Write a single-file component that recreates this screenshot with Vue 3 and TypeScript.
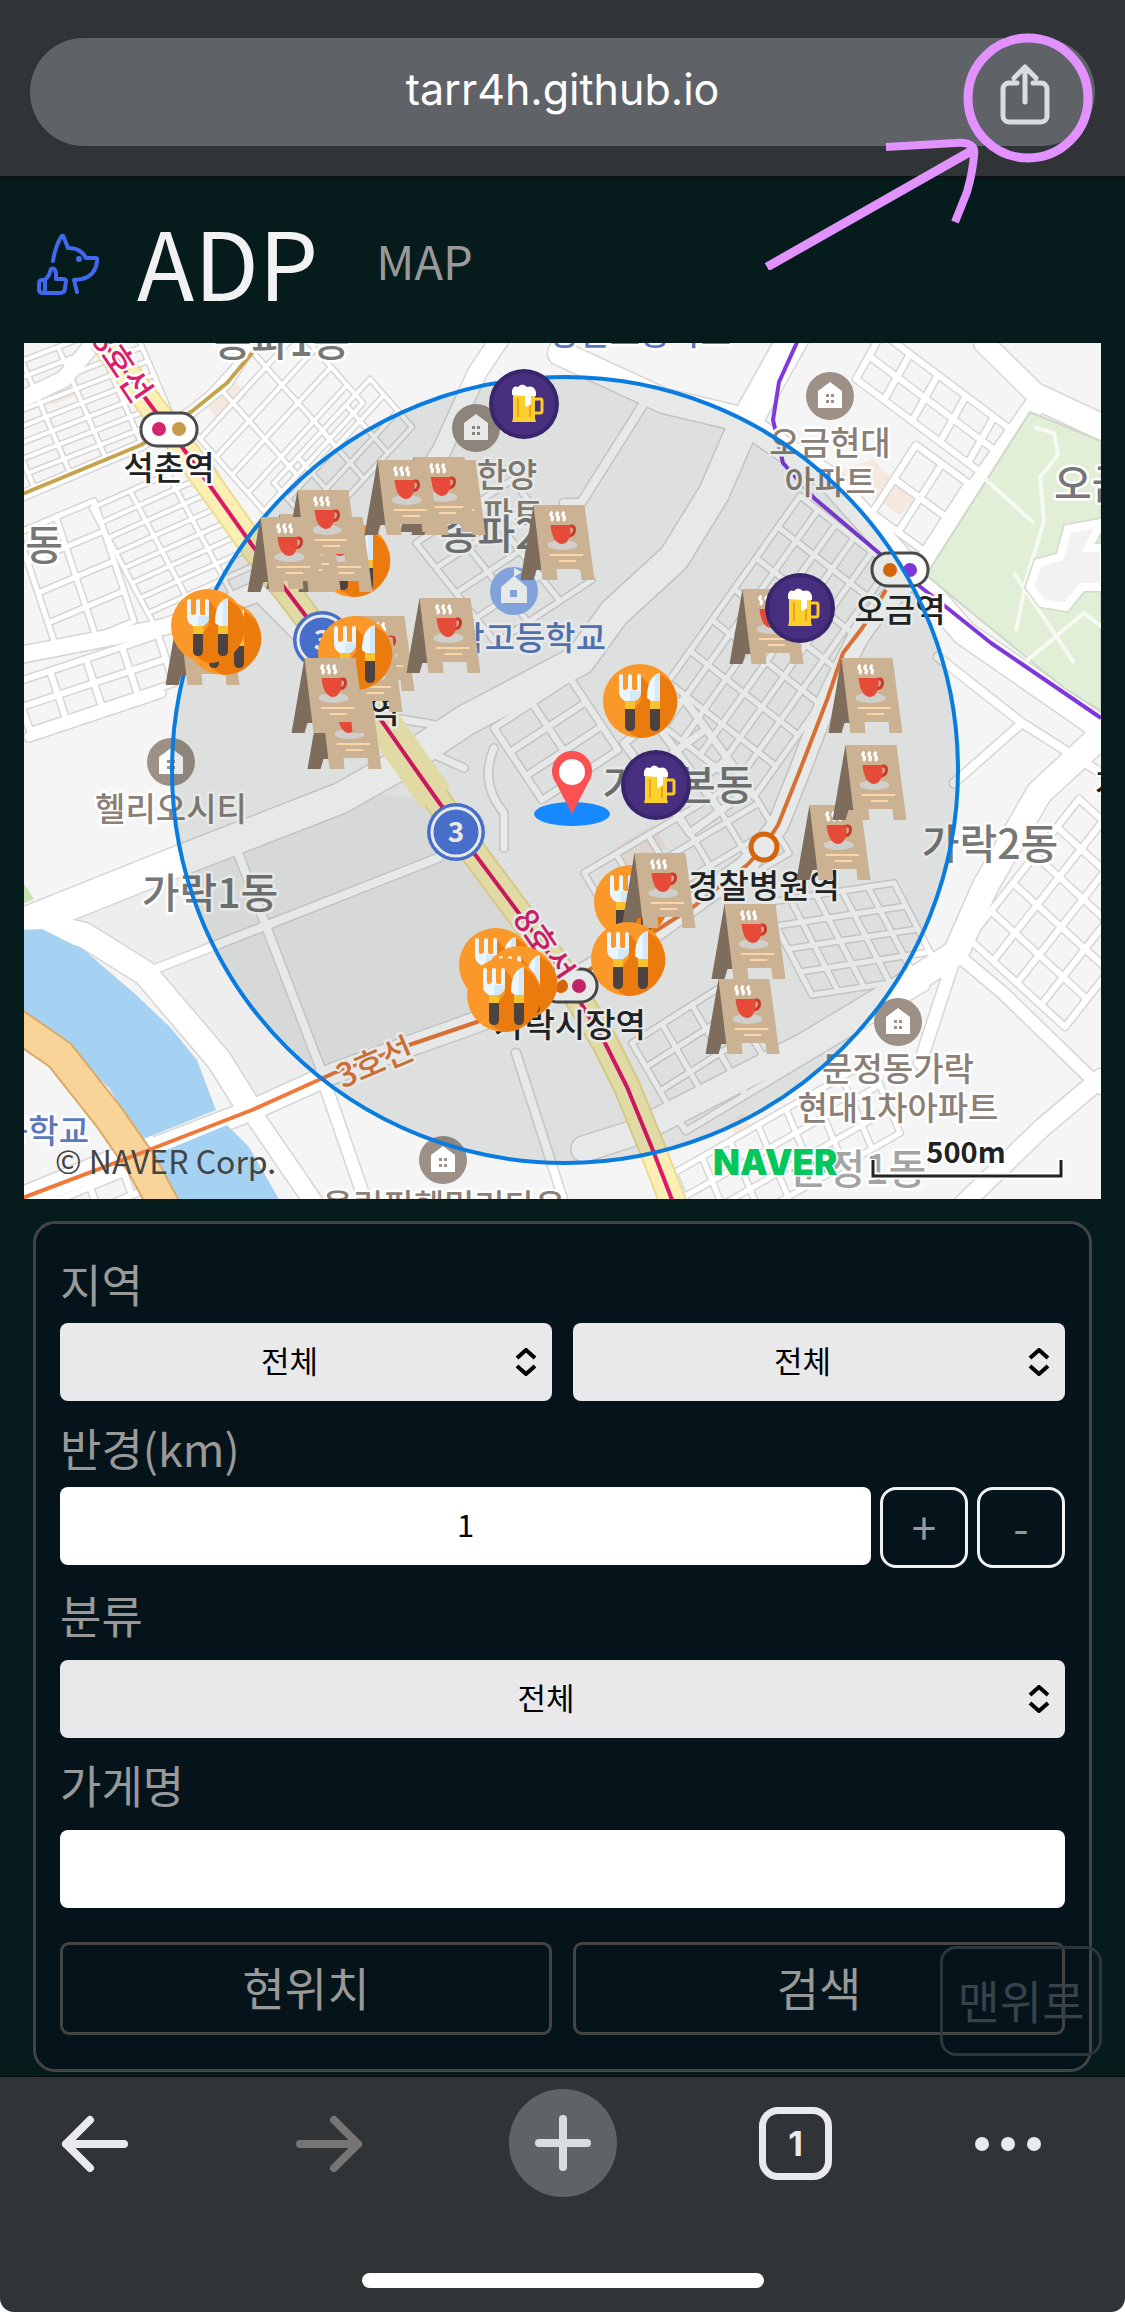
<script setup lang="ts">
import { ref } from 'vue'

type Kind = 'cafe' | 'food' | 'beer'
interface Marker { kind: Kind; x: number; y: number }
interface Label { text: string; x: number; y: number; tone: string; anchor?: 'start' | 'end'; turn?: number }
interface Road { d: string; w: number }

const host = ref('tarr4h.github.io')
const city = ref('전체')
const district = ref('전체')
const category = ref('전체')
const radius = ref('1')
const shopName = ref('')

function step(delta: number): void {
  radius.value = String(Math.max(1, Number(radius.value) + delta))
}
function toTop(): void {
  window.scrollTo({ top: 0, behavior: 'smooth' })
}

// Street mesh: nu by nv cells spanned by the vectors u and v.
function mesh(x: number, y: number, ux: number, uy: number, vx: number, vy: number, nu: number, nv: number): string {
  let d = ''
  for (let j = 0; j <= nv; j++) {
    d += `M${x + vx * j} ${y + vy * j}l${ux * nu} ${uy * nu}`
  }
  for (let i = 0; i <= nu; i++) {
    d += `M${x + ux * i} ${y + uy * i}l${vx * nv} ${vy * nv}`
  }
  return d
}

const roads: Road[] = [
  { d: mesh(-38, 32, 36, -14, 6, 14, 4, 8), w: 4 },
  { d: mesh(68, 165, 38, -17, 8, 15, 3, 8), w: 4 },
  { d: mesh(-6, 190, 38, -16, 10, 30, 2, 4), w: 5 },
  { d: mesh(160, 78, 33, -36, 16, 18, 3, 5), w: 4 },
  { d: mesh(250, 140, 24, -26, 14, 16, 4, 3), w: 4 },
  { d: mesh(-10, 340, 36, -12, 8, 24, 4, 2), w: 6 },
  { d: mesh(392, 200, 32, -21, 20, 25, 3, 4), w: 5 },
  { d: mesh(470, 385, 38, -25, 16, 24, 2, 3), w: 6 },
  { d: mesh(600, 400, 30, -22, 22, 30, 2, 3), w: 7 },
  { d: mesh(560, 530, 32, -19, 15, 25, 5, 3), w: 5 },
  { d: mesh(622, 370, 22, -31, 18, 14, 7, 6), w: 5 },
  { d: mesh(740, 560, 26, -4, 12, 23, 5, 4), w: 5 },
  { d: mesh(608, 700, 30, -19, 14, 24, 3, 3), w: 5 },
  { d: mesh(650, 770, 60, -36, 12, 18, 4, 1), w: 6 },
  { d: mesh(945, 596, 22, -28, 24, 22, 5, 4), w: 6 },
  { d: mesh(650, 830, 28, -16, 10, 24, 7, 3), w: 5 },
  { d: mesh(858, -10, 28, 21, -13, 23, 8, 2), w: 6 },
  { d: mesh(848, 170, 22, -34, 26, 19, 2, 2), w: 6 },
  { d: mesh(-10, 850, 34, -14, 8, 22, 4, 2), w: 6 },
  { d: 'M121 630L414 515M214 510L296 724M492 710L539 856M914 314L998 380L930 440M998 380L1077 430M622 57L557 160L540 160', w: 8 },
  { d: 'M5 394L137 350', w: 9 },
  { d: 'M385 400L440 425M480 505V470Q455 440 470 405M300 310L340 370L430 385', w: 7 },
  { d: 'M303 747L342 860M936 614L979 650L1077 745M932 610L896 720', w: 12 },
  { d: 'M225 765L290 860M1077 735L1019 784L935 865M480 -10L453 30L418 107L370 180', w: 18 },
  { d: 'M-10 60L40 36L78 -10M-4 312L140 284L235 250L285 300', w: 16 },
  { d: 'M536 10L640 58L716 76L806 137L880 220L940 290L1077 385', w: 24 },
  { d: 'M-10 584L30 568L150 520L317 455L370 425L442 377L556 317L590 270L650 215L690 150L716 90L772 -10', w: 30 },
  { d: 'M10 580L60 592L121 630L195 717L225 765', w: 24 },
  { d: 'M-10 860L117 810L228 767L310 730L453 679L536 644L633 587L723 522L754 482L776 427L803 357L839 284L900 220L1016 55L960 0', w: 20 },
  { d: 'M1016 55L1080 85M1080 390L1015 450L961 544L932 610L817 684L700 744L610 790L560 806', w: 25 },
  { d: 'M-10 156L117 102L167 69L203 40L235 -10', w: 10 },
]

const line8 = 'M78 -3L128 64L153 97L189 147L228 202L300 297L357 377L392 427L419 465L450 510L500 577L539 630L558 662L581 700L603 744L630 810L650 862'
const line3 = 'M862 247L839 284L819 310L803 357L776 427L754 482L740 504L723 522L669 564L633 587L536 644L453 679L385 702L310 730L228 767L117 810L-4 856'

const labels: Label[] = [
  { text: '석촌역', x: 145, y: 137, tone: 'station' },
  { text: '송파1동', x: 258, y: 13, tone: 'dong' },
  { text: '방산고등학교', x: 616, y: 2, tone: 'school' },
  { text: '8호선', x: 97, y: 34, tone: 'pink', turn: 56 },
  { text: '한양', x: 483, y: 144, tone: 'poi' },
  { text: '아파트', x: 474, y: 183, tone: 'poi' },
  { text: '송파2동', x: 484, y: 206, tone: 'dong' },
  { text: '동', x: 20, y: 217, tone: 'dong' },
  { text: '가락고등학교', x: 491, y: 307, tone: 'school' },
  { text: '오금현대', x: 806, y: 112, tone: 'poi' },
  { text: '아파트', x: 806, y: 151, tone: 'poi' },
  { text: '오금역', x: 876, y: 279, tone: 'station' },
  { text: '오금공원', x: 1030, y: 156, tone: 'dong', anchor: 'start' },
  { text: '송파역', x: 330, y: 380, tone: 'station' },
  { text: '헬리오시티', x: 147, y: 478, tone: 'poi' },
  { text: '가락1동', x: 186, y: 565, tone: 'dong' },
  { text: '가락본동', x: 654, y: 457, tone: 'dong' },
  { text: '경찰병원역', x: 740, y: 555, tone: 'station' },
  { text: '가락2동', x: 966, y: 516, tone: 'dong' },
  { text: '8호선', x: 519, y: 614, tone: 'pink', turn: 56 },
  { text: '가락시장역', x: 546, y: 694, tone: 'station' },
  { text: '문정동가락', x: 874, y: 738, tone: 'poi' },
  { text: '현대1차아파트', x: 874, y: 777, tone: 'poi' },
  { text: '문정1동', x: 834, y: 841, tone: 'pale' },
  { text: '3호선', x: 351, y: 731, tone: 'orange', turn: -23 },
  { text: '고등학교', x: 65, y: 800, tone: 'school', anchor: 'end' },
  { text: '올림픽훼밀리타운', x: 420, y: 875, tone: 'poi' },
  { text: '개롱역', x: 1071, y: 453, tone: 'station', anchor: 'start' },
]

const houses = [[452, 85], [806, 53], [147, 419], [874, 679], [419, 817]]

const markers: Marker[] = [
  { kind: 'food', x: 292, y: 180 },
  { kind: 'cafe', x: 274, y: 174 },
  { kind: 'cafe', x: 242, y: 171 },
  { kind: 'cafe', x: 260, y: 147 },
  { kind: 'cafe', x: 223, y: 174 },
  { kind: 'cafe', x: 387, y: 117 },
  { kind: 'cafe', x: 376, y: 114 },
  { kind: 'cafe', x: 340, y: 117 },
  { kind: 'cafe', x: 496, y: 162 },
  { kind: 'cafe', x: 316, y: 273 },
  { kind: 'cafe', x: 304, y: 294 },
  { kind: 'cafe', x: 382, y: 255 },
  { kind: 'food', x: 294, y: 273 },
  { kind: 'cafe', x: 283, y: 351 },
  { kind: 'cafe', x: 267, y: 315 },
  { kind: 'cafe', x: 141, y: 267 },
  { kind: 'food', x: 163, y: 258 },
  { kind: 'food', x: 147, y: 246 },
  { kind: 'cafe', x: 705, y: 246 },
  { kind: 'cafe', x: 804, y: 315 },
  { kind: 'cafe', x: 772, y: 462 },
  { kind: 'cafe', x: 808, y: 402 },
  { kind: 'food', x: 579, y: 321 },
  { kind: 'food', x: 570, y: 522 },
  { kind: 'cafe', x: 597, y: 510 },
  { kind: 'food', x: 567, y: 579 },
  { kind: 'cafe', x: 687, y: 561 },
  { kind: 'cafe', x: 681, y: 636 },
  { kind: 'food', x: 435, y: 585 },
  { kind: 'food', x: 459, y: 603 },
  { kind: 'food', x: 443, y: 615 },
  { kind: 'beer', x: 465, y: 26 },
  { kind: 'beer', x: 741, y: 230 },
  { kind: 'beer', x: 597, y: 407 },
]
</script>

<template>
  <div class="screen">
    <header class="browser-top">
      <input class="address" type="text" v-model="host" aria-label="주소" />
      <button class="share" type="button" aria-label="공유">
        <svg width="50" height="62" viewBox="0 0 50 62">
          <path d="M17 20H9a6 6 0 0 0-6 6v27a6 6 0 0 0 6 6h32a6 6 0 0 0 6-6V26a6 6 0 0 0-6-6h-8M25 39V5M14 15L25 4l11 11" />
        </svg>
      </button>
      <svg class="hint" width="340" height="250" viewBox="0 0 340 250" aria-hidden="true">
        <circle cx="263" cy="78" r="60" stroke-width="9" />
        <path d="M2 247L208 130" stroke-width="9" />
        <path d="M121 127L190 123Q212 121 209 136Q207 155 202 172L190 202" stroke-width="8" />
      </svg>
    </header>

    <main class="page">
      <nav class="site-nav">
        <svg class="dog" width="62" height="62" viewBox="0 0 62 62" aria-hidden="true">
          <path d="M16 28Q18 14 24 4Q26 1 27 5L31 15Q43 14 49 25H59Q61 25 60 29Q58 43 45 46L37 47L40 59M8 60H23Q28 60 28 55L29 49Q29 46 26 46H19V40Q18 34 14 36L12 42L8 47ZM8 47H5Q2 47 2 51V56Q2 60 6 60H8" />
          <circle cx="42" cy="26" r="3" />
        </svg>
        <a class="brand" href="#home">ADP</a>
        <a class="menu" href="#map">MAP</a>
      </nav>

      <svg class="map" viewBox="0 0 1077 856" role="img" aria-label="지도">
        <defs>
          <symbol id="cafe" viewBox="0 0 74 75">
            <path d="M13 0L0 75H13L16 65H26V30Z" fill="#7e6c5c" />
            <path d="M13 0H64L74 75H61L60 64H36L37 75H22Z" fill="#cbb292" />
            <path d="M32 7q-3 2-1 4t0 5M38 7q-3 2-1 4t0 5M44 7q-3 2-1 4t0 5" stroke="#fff" stroke-width="3" fill="none" />
            <ellipse cx="42" cy="40" rx="15" ry="5" fill="#d0cfcb" />
            <path d="M47 22q7-3 7 3t-8 6" stroke="#c93a2b" stroke-width="3" fill="none" />
            <path d="M30 20H50V28Q48 39 42 39Q32 39 30 20Z" fill="#e64b3a" />
            <path d="M30 50H62M39 56H55" stroke="#fbd5a8" stroke-width="2" stroke-linecap="round" />
          </symbol>
          <symbol id="food" viewBox="0 0 75 75">
            <circle cx="37" cy="37" r="37" fill="#fb982a" />
            <path d="M57 10L67 17Q80 36 70 54Q58 74 37 74Q30 72 24 66L32 60V44L38 36V12L47 22Z" fill="#eb7b0d" />
            <path d="M16 12Q16 10 18 10T20 12V24Q20 26 22 26T25 24V12Q25 10 27 10T29 12V24Q29 26 32 26T34 24V12Q34 10 36 10T38 12V28Q38 34 32 37H22Q16 34 16 28Z" fill="#eaf6fd" />
            <path d="M27 27H38V28Q38 34 32 37H27Z" fill="#d3e9f9" />
            <path d="M57 9Q44 12 44 34L48 37H57Z" fill="#eaf6fd" />
            <path d="M52 11L57 9V37H52Z" fill="#d3e9f9" />
            <path d="M22 37H32V45H22ZM47 37H57V45H47Z" fill="#f8c22f" />
            <path d="M22 45H32V62Q32 67 27 67T22 62ZM47 45H57V62Q57 67 52 67T47 62Z" fill="#4d4240" />
          </symbol>
          <symbol id="beer" viewBox="0 0 70 70">
            <circle cx="35" cy="35" r="35" fill="#38266c" />
            <circle cx="35" cy="35" r="31" fill="#472e7f" />
            <path d="M45 30h7q1 0 1 2v10q0 2-2 2h-6" fill="none" stroke="#fac82d" stroke-width="3" />
            <path d="M24 24H46V49L47 53H23L24 49Z" fill="#fcd02c" />
            <path d="M29 29V48M41 33V48" stroke="#e9a51d" stroke-width="2" />
            <path d="M23 26V22Q24 16 29 18Q33 13 38 18Q45 16 47 23V27H42V34Q41 38 39 36Q38 40 36 36V27Z" fill="#fff" />
          </symbol>
          <symbol id="house" viewBox="0 0 48 48">
            <circle cx="24" cy="24" r="24" fill="#9c9087" />
            <path d="M24 10L36 19V36H12V19Z" fill="#fff" />
            <path d="M20 22h3v3h-3zM25 22h3v3h-3zM20 28h3v3h-3zM25 28h3v3h-3z" fill="#9c9087" />
          </symbol>
        </defs>

        <rect width="1077" height="856" fill="#f5f5f5" />
        <path d="M45 575L215 512L340 450L395 455L500 600L450 680L300 722L225 765L195 717L121 635Z" fill="#eeeeee" />
        <path d="M20 40l30-10 8 20-30 12zM180 60l28-24 16 16-28 26zM810 130l40-14 10 12 30 30-14 14-46-32zM590 505l40-24 12 24-40 24zM705 780l14-10 10 18-14 8z" fill="#f5e9df" />

        <g fill="none" stroke-linejoin="round" stroke-linecap="round">
          <path v-for="(r, i) in roads" :key="'edge' + i" :d="r.d" :stroke-width="r.w + 3" stroke="#d6d6d6" />
          <path v-for="(r, i) in roads" :key="'road' + i" :d="r.d" :stroke-width="r.w" stroke="#ffffff" />
        </g>

        <path d="M1006 69L1077 98V368L1040 345L902 232Z" fill="#e2efd7" stroke="#d0d8c8" stroke-width="2" />
        <g fill="none" stroke="#f6faf2" stroke-width="4">
          <path d="M1010 84l20 6 4 22-18 22 4 44-18 60-10 50M960 135l50 45M1000 320l60-50 18 14M990 230l60 90" />
        </g>
        <path d="M1077 180L1044 186L1036 214L1014 220L1006 244L1018 260L1042 264L1058 244H1080V205H1064Z" fill="#f2f2f2" stroke="#d2dcca" stroke-width="11" />
        <path d="M1077 180L1044 186L1036 214L1014 220L1006 244L1018 260L1042 264L1058 244H1080V205H1064Z" fill="#f2f2f2" stroke="#fff" stroke-width="8" />

        <path d="M-4 587L18 586L60 607L110 650L146 684L173 717L192 767L117 797L85 745L40 700L-4 668Z" fill="#a5d2f3" />
        <path d="M125 814L203 782L225 804L256 858H152Z" fill="#a5d2f3" />
        <path d="M-4 535L10 556L-4 562Z" fill="#c8e2b8" />
        <g fill="none" stroke-linejoin="round">
          <path d="M-16 676L36 712L85 774L117 820L142 866" stroke="#d9a968" stroke-width="33" />
          <path d="M-16 676L36 712L85 774L117 820L142 866" stroke="#f8d499" stroke-width="29" />
          <path :d="line8" stroke="#eadb90" stroke-width="28" />
          <path :d="line8" stroke="#fbefb4" stroke-width="24" />
          <path d="M345 360L412 455" stroke="#fbefb4" stroke-width="36" />
          <path :d="line8" stroke="#df1768" stroke-width="4" />
          <path d="M-4 152L117 102L167 69L203 40L228 10L235 -3" stroke="#c6a34f" stroke-width="4" />
          <path :d="line3" stroke="#f07838" stroke-width="4" />
          <path d="M774 -3L755 39L749 77L759 120L790 155L875 227L922 264L967 300L1077 375" stroke="#8038dc" stroke-width="4" />
        </g>

        <g fill="#fff" stroke="#4b4b4b" stroke-width="3">
          <rect x="117" y="70" width="56" height="33" rx="16" />
          <rect x="848" y="210" width="56" height="33" rx="16" />
          <rect x="517" y="626" width="56" height="33" rx="16" />
        </g>
        <circle cx="135" cy="86" r="7" fill="#d6246c" />
        <circle cx="155" cy="86" r="7" fill="#c49c4c" />
        <circle cx="866" cy="227" r="7" fill="#ea6c0a" />
        <circle cx="886" cy="227" r="7" fill="#8336d8" />
        <circle cx="537" cy="643" r="7" fill="#ea6c0a" />
        <circle cx="555" cy="643" r="7" fill="#d6246c" />
        <circle cx="740" cy="504" r="13" fill="#fff" stroke="#ea6c0a" stroke-width="5" />

        <g v-for="c in [[298, 297], [432, 489]]" :key="c[0]">
          <circle :cx="c[0]" :cy="c[1]" r="29" fill="#4f78dd" />
          <circle :cx="c[0]" :cy="c[1]" r="24" fill="none" stroke="#fff" stroke-width="3" />
          <text class="route" :x="c[0]" :y="c[1] + 10">3</text>
        </g>

        <use v-for="h in houses" :key="h[0]" href="#house" :x="h[0] - 24" :y="h[1] - 24" width="48" height="48" />
        <circle cx="490" cy="248" r="24" fill="#8fb0f0" />
        <path d="M490 233L503 244V260H477V244ZM490 233V225l8 4-8 5" fill="#fff" />
        <rect x="486" y="247" width="7" height="7" fill="#8fb0f0" />

        <text
          v-for="(l, i) in labels"
          :key="i"
          :class="['label', l.tone]"
          :x="l.x"
          :y="l.y"
          :text-anchor="l.anchor ?? 'middle'"
          :transform="l.turn ? `rotate(${l.turn} ${l.x} ${l.y - 11})` : undefined"
        >{{ l.text }}</text>

        <circle cx="541" cy="427" r="393" fill="#0a2820" fill-opacity="0.1" stroke="#0b7cdf" stroke-width="4" />

        <ellipse cx="548" cy="471" rx="38" ry="12" fill="#1689ff" />
        <path d="M548 471L532 440A20 20 0 1 1 564 440Z" fill="#fb5153" />
        <circle cx="548" cy="429" r="13" fill="#fff" />

        <use
          v-for="(m, i) in markers"
          :key="'marker' + i"
          :href="'#' + m.kind"
          :x="m.x"
          :y="m.y"
          :width="m.kind === 'beer' ? 70 : 75"
          :height="m.kind === 'beer' ? 70 : 75"
        />

        <text class="copyright" x="31" y="831">© NAVER Corp.</text>
        <text class="naver" x="689" y="832">NAVER</text>
        <text class="scale" x="942" y="820">500m</text>
        <path d="M849 816V833H1037V816" fill="none" stroke="#fff" stroke-width="7" />
        <path d="M849 817V833H1037V817" fill="none" stroke="#222" stroke-width="3" />
      </svg>

      <form class="panel" @submit.prevent>
        <div class="field">
          <label for="city">지역</label>
          <div class="pair">
            <div class="select">
              <select id="city" v-model="city"><option>전체</option></select>
              <svg width="24" height="28" viewBox="0 0 24 28"><path d="M3 10L12 2l9 8M3 18l9 8 9-8" /></svg>
            </div>
            <div class="select">
              <select v-model="district" aria-label="세부 지역"><option>전체</option></select>
              <svg width="24" height="28" viewBox="0 0 24 28"><path d="M3 10L12 2l9 8M3 18l9 8 9-8" /></svg>
            </div>
          </div>
        </div>
        <div class="field">
          <label for="radius">반경(km)</label>
          <div class="radius">
            <input id="radius" type="text" inputmode="numeric" v-model="radius" />
            <button type="button" @click="step(1)">+</button>
            <button type="button" @click="step(-1)">-</button>
          </div>
        </div>
        <div class="field roomy">
          <label for="category">분류</label>
          <div class="select">
            <select id="category" v-model="category"><option>전체</option></select>
            <svg width="24" height="28" viewBox="0 0 24 28"><path d="M3 10L12 2l9 8M3 18l9 8 9-8" /></svg>
          </div>
        </div>
        <div class="field roomy">
          <label for="shop">가게명</label>
          <input id="shop" type="text" v-model="shopName" />
        </div>
        <div class="pair actions">
          <button type="button">현위치</button>
          <button type="submit">검색</button>
        </div>
      </form>

      <button class="to-top" type="button" @click="toTop">맨위로</button>
    </main>

    <footer class="browser-bottom">
      <div class="tools">
        <button type="button" aria-label="뒤로">
          <svg width="70" height="60" viewBox="0 0 70 60"><path d="M64 31H6M30 7L6 31l24 24" stroke="#e8eaed" /></svg>
        </button>
        <button type="button" aria-label="앞으로" disabled>
          <svg width="70" height="60" viewBox="0 0 70 60"><path d="M6 31H64M40 7l24 24L40 55" stroke="#757575" /></svg>
        </button>
        <button class="new-tab" type="button" aria-label="새 탭">
          <svg width="60" height="60" viewBox="0 0 60 60"><path d="M30 6V54M6 30H54" stroke="#dadce0" /></svg>
        </button>
        <button type="button" aria-label="탭 1개"><span class="tab-count">1</span></button>
        <button type="button" aria-label="더보기">
          <svg width="70" height="60" viewBox="0 0 70 60" fill="#e8eaed">
            <circle cx="9" cy="31" r="7" /><circle cx="35" cy="31" r="7" /><circle cx="61" cy="31" r="7" />
          </svg>
        </button>
      </div>
      <div class="home-bar"></div>
    </footer>
  </div>
</template>

<style>
body {
  margin: 0;
  background: #ffffff;
}
</style>

<style scoped>
.screen {
  min-height: 100vh;
  display: flex;
  flex-direction: column;
  font-family: "Noto Sans CJK KR", sans-serif;
}
.screen * {
  box-sizing: border-box;
}
button,
input,
select {
  font: inherit;
  margin: 0;
  padding: 0;
  border: 0;
  background: none;
}
.browser-top {
  position: relative;
  padding: 38px 30px 30px;
  background: #313437;
  border-bottom: 1px solid #0c0e0f;
}
.address {
  display: block;
  width: 100%;
  height: 108px;
  padding-bottom: 6px;
  border-radius: 54px;
  background: #5f6368;
  color: #ffffff;
  font-family: Inter, sans-serif;
  font-size: 43px;
  text-align: center;
}
.share {
  position: absolute;
  top: 63px;
  right: 75px;
  height: 62px;
}
.share svg {
  display: block;
  fill: none;
  stroke: #dadce0;
  stroke-width: 5;
  stroke-linecap: round;
  stroke-linejoin: round;
}
.hint {
  position: absolute;
  top: 20px;
  right: 20px;
  z-index: 2;
  fill: none;
  stroke: #e292ff;
  pointer-events: none;
}
.page {
  position: relative;
  flex: 1;
  background: #061c1c;
  border-bottom: 1px solid #030a0a;
}
.site-nav {
  display: flex;
  align-items: center;
  height: 166px;
  padding: 8px 37px 0;
}
.dog {
  fill: none;
  stroke: #4169f0;
  stroke-width: 4;
  stroke-linejoin: round;
  stroke-linecap: round;
  margin-right: 38px;
}
.dog circle {
  fill: #4169f0;
  stroke: none;
}
.brand,
.menu {
  padding-bottom: 8px;
  text-decoration: none;
  line-height: 96px;
}
.brand {
  color: #f2f2f2;
  font-size: 94px;
}
.menu {
  margin-left: 58px;
  color: #999999;
  font-size: 47px;
}
.map {
  display: block;
  width: auto;
  margin: 0 24px;
}
.label {
  font-size: 33px;
  font-weight: 500;
  paint-order: stroke;
  stroke: #ffffff;
  stroke-width: 5px;
  stroke-linejoin: round;
}
.station {
  fill: #222222;
}
.dong {
  fill: #777777;
  font-size: 41px;
}
.pale {
  fill: #a4a4a4;
  font-size: 41px;
}
.poi {
  fill: #8b7f77;
}
.school {
  fill: #5a78bd;
}
.pink {
  fill: #dc1f6c;
}
.orange {
  fill: #e0763a;
}
.route {
  fill: #ffffff;
  font-size: 28px;
  font-weight: 700;
  text-anchor: middle;
}
.copyright {
  fill: #444444;
  font-size: 32px;
}
.naver {
  fill: #03c75a;
  font-family: Inter, sans-serif;
  font-size: 35px;
  font-weight: 900;
  paint-order: stroke;
  stroke: #ffffff;
  stroke-width: 3px;
}
.scale {
  fill: #222222;
  font-size: 29px;
  font-weight: 700;
  text-anchor: middle;
  paint-order: stroke;
  stroke: #ffffff;
  stroke-width: 5px;
}
.panel {
  margin: 22px 33px 4px;
  padding: 31px 24px 34px;
  border: 3px solid #444444;
  border-radius: 22px;
  background: #05141a;
  color: #999999;
}
.field {
  display: flex;
  flex-direction: column;
  gap: 4px;
  margin-bottom: 18px;
}
.roomy {
  gap: 10px;
}
label {
  height: 64px;
  line-height: 58px;
  font-size: 45px;
}
.pair {
  display: grid;
  grid-template-columns: 1fr 1fr;
  gap: 21px;
}
.select {
  position: relative;
}
select,
.field input {
  display: block;
  width: 100%;
  height: 78px;
  padding-bottom: 6px;
  border-radius: 8px;
  color: #000000;
  font-size: 31px;
}
select {
  appearance: none;
  padding-right: 33px;
  background: #e9e9eb;
  text-align: center;
  text-align-last: center;
}
.select svg {
  position: absolute;
  top: 25px;
  right: 14px;
  fill: none;
  stroke: #000000;
  stroke-width: 4;
  pointer-events: none;
}
.field input {
  background: #ffffff;
  text-align: center;
}
.radius {
  display: flex;
  gap: 9px;
}
.radius input {
  flex: 1;
  min-width: 0;
}
.radius button {
  width: 88px;
  height: 81px;
  padding-bottom: 4px;
  border: 3px solid #f2f2f2;
  border-radius: 16px;
  color: #999999;
  font-size: 44px;
  line-height: 60px;
}
.actions {
  margin-top: 34px;
}
.actions button {
  height: 93px;
  padding-bottom: 5px;
  border: 3px solid #444444;
  border-radius: 9px;
  color: #999999;
  font-size: 46px;
}
.to-top {
  position: absolute;
  right: 23px;
  bottom: 20px;
  width: 162px;
  height: 110px;
  padding-bottom: 5px;
  border: 3px solid #2a383e;
  border-radius: 16px;
  color: #36434a;
  font-size: 46px;
}
.browser-bottom {
  display: flex;
  flex-direction: column;
  align-items: center;
  justify-content: space-between;
  padding: 12px 0 24px;
  height: 235px;
  background: #313437;
  border-radius: 0 0 14px 14px;
}
.tools {
  width: 100%;
  display: grid;
  grid-template-columns: 190fr 277fr 192fr 273fr 151fr 42fr;
  align-items: center;
  justify-items: center;
}
.tools button {
  display: flex;
  align-items: center;
  justify-content: center;
}
.tools path {
  fill: none;
  stroke-width: 8;
  stroke-linecap: round;
  stroke-linejoin: round;
}
.tools .new-tab {
  width: 108px;
  height: 108px;
  border-radius: 54px;
  background: #5f6368;
}
.tab-count {
  width: 73px;
  height: 73px;
  border: 7px solid #e8eaed;
  border-radius: 19px;
  color: #e8eaed;
  font-family: Inter, sans-serif;
  font-size: 34px;
  font-weight: 700;
  line-height: 60px;
}
.home-bar {
  width: 402px;
  max-width: 60%;
  height: 15px;
  border-radius: 8px;
  background: #ffffff;
}
</style>
